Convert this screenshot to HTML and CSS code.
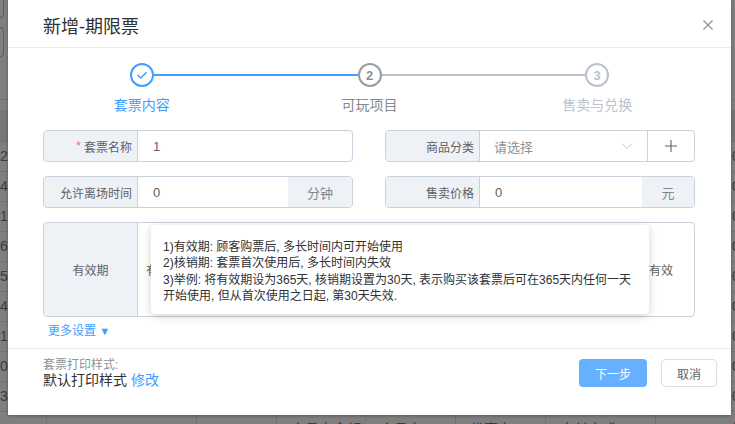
FILE: index.html
```html
<!DOCTYPE html>
<html lang="zh">
<head>
<meta charset="utf-8">
<link rel="stylesheet" href="styles.css">
</head>
<body>
<div class="bg">
  <div class="bg-top">
    <div class="bg-box bg-box1"></div>
    <div class="bg-box bg-box2"></div>
  </div>
  <div class="bg-head"></div>
  <div class="bg-row"><span class="c c0">2</span><span class="c c1"></span><span class="c c2"></span><span class="c c3"></span><span class="c c4"></span><span class="c c5"></span><span class="c c6"></span><span class="c c7">0</span></div>
  <div class="bg-row"><span class="c c0">4</span><span class="c c1"></span><span class="c c2"></span><span class="c c3"></span><span class="c c4"></span><span class="c c5"></span><span class="c c6"></span><span class="c c7">0</span></div>
  <div class="bg-row"><span class="c c0">1</span><span class="c c1"></span><span class="c c2"></span><span class="c c3"></span><span class="c c4"></span><span class="c c5"></span><span class="c c6"></span><span class="c c7">0</span></div>
  <div class="bg-row"><span class="c c0">6</span><span class="c c1"></span><span class="c c2"></span><span class="c c3"></span><span class="c c4"></span><span class="c c5"></span><span class="c c6"></span><span class="c c7">0</span></div>
  <div class="bg-row"><span class="c c0">5</span><span class="c c1"></span><span class="c c2"></span><span class="c c3"></span><span class="c c4"></span><span class="c c5"></span><span class="c c6"></span><span class="c c7">0</span></div>
  <div class="bg-row"><span class="c c0">4</span><span class="c c1"></span><span class="c c2"></span><span class="c c3"></span><span class="c c4"></span><span class="c c5"></span><span class="c c6"></span><span class="c c7">0</span></div>
  <div class="bg-row"><span class="c c0">1</span><span class="c c1"></span><span class="c c2"></span><span class="c c3"></span><span class="c c4"></span><span class="c c5"></span><span class="c c6"></span><span class="c c7">0</span></div>
  <div class="bg-row"><span class="c c0">0</span><span class="c c1"></span><span class="c c2"></span><span class="c c3"></span><span class="c c4"></span><span class="c c5"></span><span class="c c6"></span><span class="c c7">0</span></div>
  <div class="bg-row"><span class="c c0">3</span><span class="c c1"></span><span class="c c2"></span><span class="c c3"></span><span class="c c4"></span><span class="c c5"></span><span class="c c6"></span><span class="c c7">0</span></div>
  <div class="bg-row bg-row-last"><span class="c c0"></span><span class="c c1"></span><span class="c c2"></span><span class="c c3">会员卡余额</span><span class="c c4">会员卡</span><span class="c c5">优惠卡</span><span class="c c6">支付方式</span><span class="c c7">操作</span></div>
</div>
<div class="mask"></div>

<div class="dialog">
  <div class="dlg-header">
    <span class="dlg-title">新增-期限票</span>
    <svg class="dlg-close" width="10" height="10" viewBox="0 0 10 10"><path d="M0.5 0.5L9.5 9.5M9.5 0.5L0.5 9.5" stroke="#909399" stroke-width="1.2" fill="none"/></svg>
  </div>

  <div class="steps">
    <div class="steps-head">
      <span class="st-spacer"></span>
      <span class="st-icon st-done">
        <svg width="20" height="20" viewBox="0 0 20 20"><path d="M5.5 9.8L8.8 13L14.5 7.2" stroke="#409eff" stroke-width="1.4" fill="none"/></svg>
      </span>
      <span class="st-line st-line-done"></span>
      <span class="st-icon st-active">2</span>
      <span class="st-line"></span>
      <span class="st-icon st-wait">3</span>
      <span class="st-spacer"></span>
    </div>
    <div class="steps-titles">
      <span class="st-title st-title-done">套票内容</span>
      <span class="st-title st-title-active">可玩项目</span>
      <span class="st-title st-title-wait">售卖与兑换</span>
    </div>
  </div>

  <div class="form">
    <div class="form-grid">
      <div class="field">
        <span class="f-label"><span class="req">*</span> 套票名称</span>
        <span class="f-input">1</span>
      </div>
      <div class="field">
        <span class="f-label">商品分类</span>
        <span class="f-input f-select"><span class="ph">请选择</span>
          <svg width="12" height="8" viewBox="0 0 12 8"><path d="M1 1.5L6 6.5L11 1.5" stroke="#c0c4cc" stroke-width="1" fill="none"/></svg>
        </span>
        <span class="f-plus"><svg width="12" height="12" viewBox="0 0 12 12"><path d="M6 0V12M0 6H12" stroke="#606266" stroke-width="1.1" fill="none"/></svg></span>
      </div>
      <div class="field">
        <span class="f-label">允许离场时间</span>
        <span class="f-input">0</span>
        <span class="f-suffix f-suffix-min">分钟</span>
      </div>
      <div class="field">
        <span class="f-label">售卖价格</span>
        <span class="f-input">0</span>
        <span class="f-suffix f-suffix-yuan">元</span>
      </div>
    </div>

    <div class="valid-box">
      <span class="f-label f-label-center">有效期</span>
      <div class="valid-content">
        <span>有</span>
        <span>有效</span>
      </div>
      <div class="tooltip">
        1)有效期: 顾客购票后, 多长时间内可开始使用<br>
        2)核销期: 套票首次使用后, 多长时间内失效<br>
        3)举例: 将有效期设为365天, 核销期设置为30天, 表示购买该套票后可在365天内任何一天<br>
        开始使用, 但从首次使用之日起, 第30天失效.
      </div>
    </div>

    <div class="more">更多设置 <span class="more-arrow">▼</span></div>
  </div>

  <div class="dlg-footer">
    <div class="print">
      <div class="print-label">套票打印样式:</div>
      <div class="print-value">默认打印样式 <span class="link">修改</span></div>
    </div>
    <div class="btns">
      <span class="btn btn-primary">下一步</span>
      <span class="btn btn-default">取消</span>
    </div>
  </div>
</div>
</body>
</html>
```

FILE: styles.css
```css
* { box-sizing: border-box; }
html, body {
  margin: 0;
  padding: 0;
  width: 735px;
  height: 424px;
  overflow: hidden;
  font-family: "Liberation Sans", "Noto Sans CJK SC", sans-serif;
}

/* ---------- background page ---------- */
.bg {
  position: relative;
  width: 735px;
  height: 424px;
  background: #fff;
  color: #777;
  font-size: 14px;
  overflow: hidden;
}
.bg-top {
  display: flow-root;
  height: 100px;
  border-bottom: 1px solid #e6e6e6;
}
.bg-box {
  width: 4px;
  height: 30px;
  border: 1px solid #bbb;
  border-left: none;
  border-radius: 0 4px 4px 0;
}
.bg-box1 { margin-top: -12px; }
.bg-box2 { margin-top: 9px; }
.bg-head {
  height: 32px;
  margin-top: 10px;
  background: #ececec;
  border-bottom: 1px solid #e0e0e0;
}
.bg-row {
  display: flex;
  height: 30px;
  border-bottom: 1px solid #e4e4e4;
  line-height: 29px;
}
.c { display: block; height: 100%; border-right: 1px solid #e4e4e4; white-space: nowrap; overflow: hidden; }
.c0 { width: 47px; }
.c1 { width: 150px; }
.c2 { width: 80px; }
.c3 { width: 89px; padding-left: 14px; }
.c4 { width: 90px; padding-left: 14px; }
.c5 { width: 90px; padding-left: 14px; }
.c6 { width: 110px; padding-left: 14px; }
.c7 { flex: 1; border-right: none; padding-left: 76px; }
.bg-row-last .c { padding-top: 3px; }

.mask {
  position: absolute;
  inset: 0;
  background: rgba(0, 0, 0, 0.5);
}

/* ---------- dialog ---------- */
.dialog {
  position: absolute;
  left: 8px;
  top: 0;
  width: 723px;
  height: 415px;
  background: #fff;
  box-shadow: 0 1px 3px rgba(0, 0, 0, 0.3);
  display: flex;
  flex-direction: column;
}
.dlg-header {
  display: flex;
  justify-content: space-between;
  align-items: flex-start;
  height: 48px;
  padding: 15px 18px 0 35px;
  border-bottom: 1px solid #e8eaee;
}
.dlg-title {
  font-size: 18px;
  line-height: 24px;
  color: #303133;
}
.dlg-close { margin-top: 5px; }

/* steps */
.steps { padding: 15px 20px 0; }
.steps-head {
  display: flex;
  align-items: center;
  height: 24px;
}
.st-spacer { flex: 1; }
.st-line { flex: 2; height: 2px; background: #b8bfcd; }
.st-line-done { background: #409eff; }
.st-icon {
  width: 24px;
  height: 24px;
  border-radius: 50%;
  border: 2px solid #c0c4cc;
  display: flex;
  align-items: center;
  justify-content: center;
  font-size: 13px;
  font-weight: bold;
  flex: none;
}
.st-done { border-color: #409eff; }
.st-active { border-color: #9a9ca3; color: #8e9096; }
.st-wait { border-color: #bcc2ce; color: #bcc2ce; }
.steps-titles {
  display: grid;
  grid-template-columns: 1fr 1fr 1fr;
  margin-top: 8px;
  text-align: center;
  font-size: 14px;
  line-height: 20px;
}
.st-title-done { color: #409eff; }
.st-title-active { color: #86898f; }
.st-title-wait { color: #bcc2ce; }

/* form */
.form { padding: 15px 36px 0 35px; }
.form-grid {
  display: grid;
  grid-template-columns: 1fr 1fr;
  column-gap: 32px;
  row-gap: 14px;
}
.field {
  display: flex;
  height: 32px;
  border: 1px solid #c9d1dd;
  border-radius: 4px;
  overflow: hidden;
}
.f-label {
  width: 94px;
  flex: none;
  background: #eef1f6;
  border-right: 1px solid #c9d1dd;
  font-size: 12px;
  color: #606266;
  text-align: right;
  padding-right: 5px;
  display: flex;
  align-items: center;
  justify-content: flex-end;
}
.req { color: #f56c6c; margin-right: 3px; }
.f-input {
  flex: 1;
  display: flex;
  align-items: center;
  padding-left: 15px;
  font-size: 13px;
  color: #606266;
}
.f-select {
  justify-content: space-between;
  padding-left: 14px;
  padding-right: 14px;
}
.ph { color: #8e9299; }
.f-plus {
  width: 47px;
  flex: none;
  border-left: 1px solid #c9d1dd;
  display: flex;
  align-items: center;
  justify-content: center;
}
.f-suffix {
  flex: none;
  background: #eef1f6;
  display: flex;
  align-items: center;
  justify-content: center;
  font-size: 13px;
  color: #80848b;
}
.f-suffix-min { width: 64px; }
.f-suffix-yuan { width: 52px; }

.valid-box {
  position: relative;
  display: flex;
  height: 95px;
  margin-top: 14px;
  border: 1px solid #c9d1dd;
  border-radius: 4px;
}
.valid-box > .f-label {
  border-radius: 4px 0 0 4px;
}
.f-label-center {
  justify-content: center;
  padding-right: 0;
}
.valid-content {
  flex: 1;
  display: flex;
  justify-content: space-between;
  align-items: center;
  padding: 0 21px 0 8px;
  font-size: 12px;
  color: #606266;
}
.tooltip {
  position: absolute;
  left: 107px;
  top: 2px;
  width: 498px;
  height: 89px;
  background: #fff;
  border-radius: 4px;
  box-shadow: 0 2px 10px rgba(0, 0, 0, 0.18);
  padding: 14px 12px 0;
  font-size: 12px;
  line-height: 16.3px;
  color: #303133;
  white-space: nowrap;
}
.more {
  margin-top: 6px;
  padding-left: 5px;
  font-size: 12px;
  line-height: 16px;
  color: #409eff;
}
.more-arrow { font-size: 11px; }

/* footer */
.dlg-footer {
  margin-top: auto;
  height: 67px;
  border-top: 1px solid #e8eaee;
  display: flex;
  justify-content: space-between;
  align-items: flex-start;
  padding: 9px 14px 0 35px;
}
.print-label {
  font-size: 12px;
  line-height: 15px;
  color: #909399;
}
.print-value {
  font-size: 14px;
  line-height: 15px;
  color: #303133;
}
.link { color: #409eff; }
.btns {
  display: flex;
  gap: 14px;
  margin-top: 1px;
}
.btn {
  height: 28px;
  border-radius: 4px;
  display: flex;
  align-items: center;
  justify-content: center;
  font-size: 12px;
}
.btn-primary {
  width: 68px;
  background: #66b1ff;
  color: #fff;
}
.btn-default {
  width: 56px;
  border: 1px solid #dcdfe6;
  color: #606266;
  background: #fff;
}
```
